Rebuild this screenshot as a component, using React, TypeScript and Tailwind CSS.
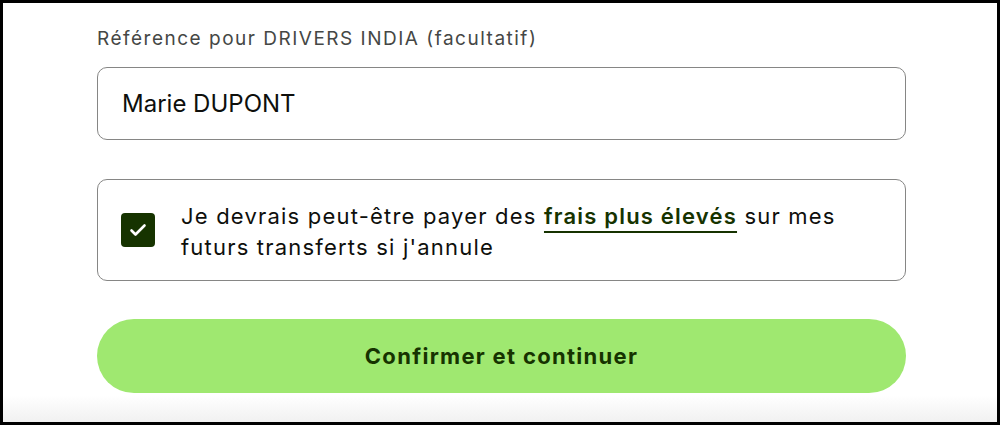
import React from "react";

export default function App() {
  return (
    <div className="w-[1000px] h-[425px] border-[3px] border-black bg-white overflow-hidden flex flex-col" style={{ fontFamily: "Inter, 'Noto Sans', sans-serif" }}>
      <div className="flex-1 flex flex-col pl-[94px] pr-[91px] pt-[24px]">
        <div className="text-[19px] leading-[24px] text-[#454745] tracking-[1.5px]">Référence pour DRIVERS INDIA (facultatif)</div>
        <div className="mt-[16px] h-[73px] rounded-[10px] border border-[#868685] flex items-center pl-[24px]">
          <span className="text-[24px] text-[#0e0f0c]">Marie DUPONT</span>
        </div>
        <div className="mt-[39px] h-[102px] rounded-[10px] border border-[#868685] flex items-center pl-[23px]">
          <div className="w-[34px] h-[34px] rounded-[4px] bg-[#163300] flex items-center justify-center shrink-0">
            <svg width="24" height="24" viewBox="0 0 24 24" fill="none" stroke="white" strokeWidth="2.6" strokeLinecap="round" strokeLinejoin="round">
              <path d="M5.5 12.5l4 4L18.5 7.5" />
            </svg>
          </div>
          <div className="ml-[26px] pt-[4px] text-[22px] leading-[31px] tracking-[1.2px] text-[#0e0f0c] w-[690px]">
            Je devrais peut-être payer des{" "}
            <span className="font-semibold text-[#163300] underline decoration-[2px] underline-offset-[7px]">frais plus élevés</span>{" "}
            sur mes futurs transferts si j'annule
          </div>
        </div>
        <div className="mt-[38px] h-[74px] rounded-full bg-[#9fe870] flex items-center justify-center">
          <span className="text-[22px] font-bold tracking-[1.3px] text-[#163300]">Confirmer et continuer</span>
        </div>
      </div>
      <div className="h-[27px] bg-gradient-to-b from-white to-[#f1f1f1] -mt-[27px] relative" />
    </div>
  );
}
